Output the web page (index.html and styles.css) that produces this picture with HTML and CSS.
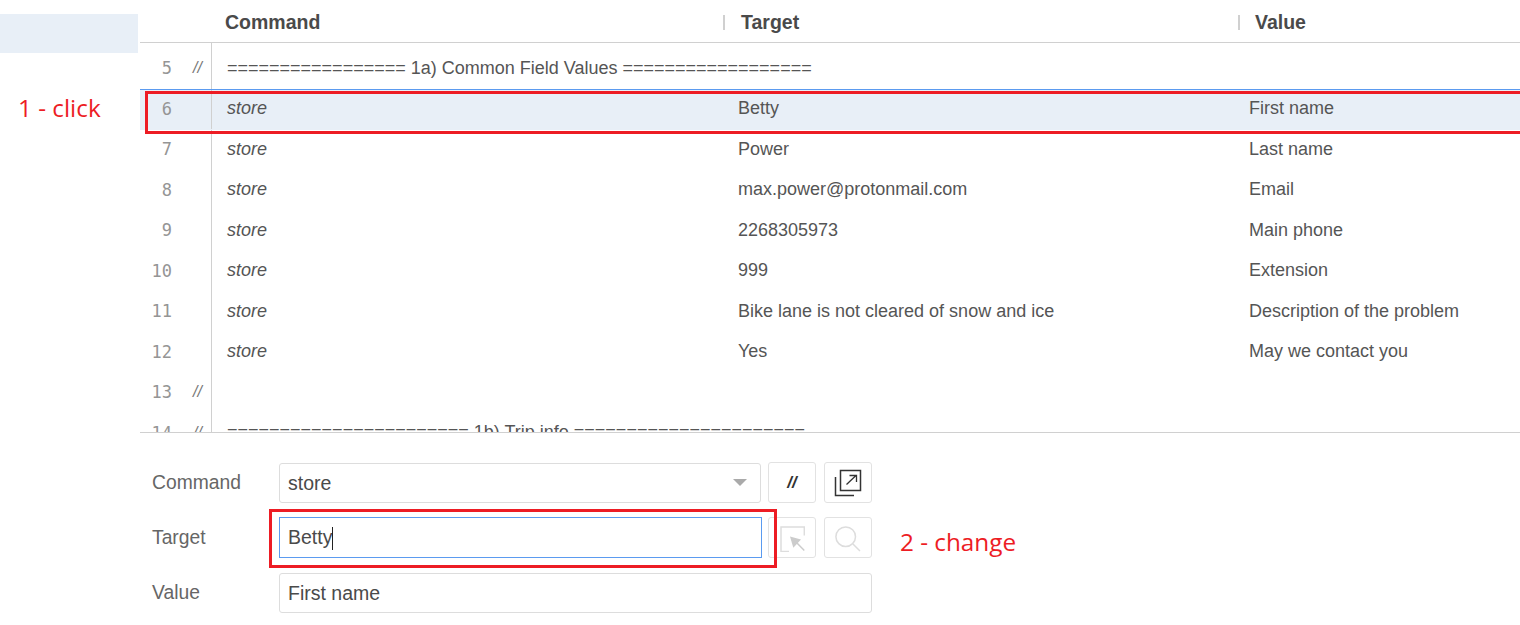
FILE: index.html
```html
<!DOCTYPE html>
<html lang="en">

<head>
    <meta charset="UTF-8">
    <title>Selenium IDE - Store values</title>
    <link rel="stylesheet" href="styles.css">
</head>

<body>
    <div class="page">
        <aside class="sidebar">
            <div class="sidebar-item"></div>
            <div class="note note-click">1 - click</div>
        </aside>

        <main class="editor">
            <section class="commands">
                <div class="table-head">
                    <div class="head-cell head-command">Command</div>
                    <div class="head-cell head-target">Target</div>
                    <div class="head-cell head-value">Value</div>
                </div>

                <div class="table-body">
                    <div class="row"><span class="num">5</span><span class="flag">//</span><span class="cmd comment">================= 1a) Common Field Values ==================</span></div>
                    <div class="row selected"><span class="num">6</span><span class="flag"></span><span class="cmd">store</span><span class="target">Betty</span><span class="value">First name</span></div>
                    <div class="row"><span class="num">7</span><span class="flag"></span><span class="cmd">store</span><span class="target">Power</span><span class="value">Last name</span></div>
                    <div class="row"><span class="num">8</span><span class="flag"></span><span class="cmd">store</span><span class="target">max.power@protonmail.com</span><span class="value">Email</span></div>
                    <div class="row"><span class="num">9</span><span class="flag"></span><span class="cmd">store</span><span class="target">2268305973</span><span class="value">Main phone</span></div>
                    <div class="row"><span class="num">10</span><span class="flag"></span><span class="cmd">store</span><span class="target">999</span><span class="value">Extension</span></div>
                    <div class="row"><span class="num">11</span><span class="flag"></span><span class="cmd">store</span><span class="target">Bike lane is not cleared of snow and ice</span><span class="value">Description of the problem</span></div>
                    <div class="row"><span class="num">12</span><span class="flag"></span><span class="cmd">store</span><span class="target">Yes</span><span class="value">May we contact you</span></div>
                    <div class="row"><span class="num">13</span><span class="flag">//</span></div>
                    <div class="row"><span class="num">14</span><span class="flag">//</span><span class="cmd comment">======================= 1b) Trip info ======================</span></div>
                </div>
                <div class="highlight-row"></div>
            </section>

            <section class="form">
                <div class="form-row">
                    <label class="form-label">Command</label>
                    <div class="field field-select">
                        <span>store</span>
                        <span class="caret"></span>
                    </div>
                    <button class="icon-btn slashes">//</button>
                    <button class="icon-btn">
                        <svg width="28" height="28" viewBox="0 0 28 28" fill="none" stroke="#333" stroke-width="1.500">
                            <path d="M6.500 1.500H26.500V21.500H6.500Z"/>
                            <path d="M1.500 8V26.500H20"/>
                            <path d="M12.500 15.500L22 6.500M15.500 6.500H22.500V13" stroke-width="1.300"/>
                        </svg>
                    </button>
                </div>
                <div class="form-row">
                    <label class="form-label">Target</label>
                    <div class="field field-focus">Betty<span class="cursor"></span></div>
                    <button class="icon-btn">
                        <svg width="26" height="28" viewBox="0 0 26 28" fill="none" stroke="#ddd" stroke-width="1.500">
                            <path d="M25.300 11.500V3H2V27.500H10"/>
                            <path d="M11 12.500L22 15.500L14.300 23.800Z" fill="#ccc" stroke="none"/>
                            <path d="M17 18L25.300 26.500" stroke="#ccc"/>
                        </svg>
                    </button>
                    <button class="icon-btn">
                        <svg width="26" height="28" viewBox="0 0 26 28" fill="none" stroke="#ddd" stroke-width="1.500">
                            <circle cx="10.700" cy="12.700" r="9.800"/>
                            <path d="M18 20L25 27"/>
                        </svg>
                    </button>
                    <div class="note note-change">2 - change</div>
                </div>
                <div class="form-row">
                    <label class="form-label">Value</label>
                    <div class="field field-wide">First name</div>
                </div>
                <div class="highlight-target"></div>
            </section>
        </main>
    </div>
</body>

</html>
```
FILE: styles.css
```css
/* RESET */
* {
    margin: 0;
    padding: 0;
    box-sizing: border-box;
}

body {
    font-family: 'Liberation Sans', Arial, sans-serif;
    color: #555;
    background-color: #fff;
    overflow: hidden;
}

.page {
    display: flex;
    height: 625px;
}

/* SIDEBAR */
.sidebar {
    width: 140px;
    padding-top: 14px;
    flex-shrink: 0;
}

.sidebar-item {
    width: 138px;
    height: 39px;
    background-color: #e8eff7;
}

.note {
    font-family: 'Open Sans', sans-serif;
    font-size: 24.300px;
    color: #ed1c24;
    white-space: nowrap;
}

.note-click {
    margin: 39px 0 0 18px;
    line-height: 32px;
}

/* TABLE */
.editor {
    flex: 1;
    min-width: 0;
}

.commands {
    position: relative;
    height: 433px;
    border-bottom: 1px solid #d0d0d0;
    overflow: hidden;
}

.table-head {
    display: flex;
    height: 43px;
    border-bottom: 1px solid #d0d0d0;
    font-size: 19.500px;
    font-weight: 700;
    color: #4a4a4a;
}

.head-cell {
    padding-top: 11px;
    line-height: 22px;
}

.head-command {
    width: 583px;
    padding-left: 85px;
}

.head-target,
.head-value {
    position: relative;
}

.head-target {
    width: 515px;
    padding-left: 18px;
}

.head-value {
    padding-left: 17px;
}

.head-target::before,
.head-value::before {
    content: "";
    position: absolute;
    left: 0;
    top: 15px;
    width: 2px;
    height: 15px;
    background-color: #d0d0d0;
}

.table-body {
    padding-top: 5px;
    background: linear-gradient(#d0d0d0, #d0d0d0) 71px 0 / 1px 100% no-repeat;
}

.row {
    display: flex;
    align-items: center;
    height: 40.500px;
    font-size: 18px;
}

.row.selected {
    position: relative;
    background: linear-gradient(#d0d0d0, #d0d0d0) 71px 0 / 1px 100% no-repeat, #e8eff7;
    box-shadow: inset 0 1px 0 #5b9bf0, 0 1px 0 #e8eff7;
}

.num {
    width: 32px;
    text-align: right;
    font-family: 'DejaVu Sans Mono', monospace;
    font-size: 17px;
    color: #959595;
}

.flag {
    width: 39px;
    padding-left: 21px;
    font-size: 16px;
    font-style: italic;
    color: #777;
}

.cmd {
    width: 511px;
    margin-left: 16px;
    font-style: italic;
    white-space: nowrap;
}

.cmd.comment {
    font-style: normal;
}

.target {
    width: 511px;
    white-space: nowrap;
}

.value {
    white-space: nowrap;
}

.highlight-row {
    position: absolute;
    left: 5px;
    top: 91px;
    right: -10px;
    height: 43px;
    border: 3px solid #ed1c24;
}

/* FORM */
.form {
    position: relative;
    padding: 29px 0 0 12px;
}

.form-row {
    display: flex;
    align-items: center;
    height: 41px;
    margin-bottom: 14px;
    font-size: 19.500px;
}

.form-label {
    width: 127px;
    font-size: 19.300px;
    color: #666;
}

.field {
    height: 40px;
    width: 482px;
    padding-left: 8px;
    line-height: 38px;
    border: 1px solid #ddd;
    border-radius: 3px;
    color: #4a4a4a;
}

.field-select {
    display: flex;
    align-items: center;
    justify-content: space-between;
    padding-right: 13px;
}

.caret {
    border-left: 7px solid transparent;
    border-right: 7px solid transparent;
    border-top: 7px solid #aaa;
}

.field-focus {
    height: 41px;
    width: 483px;
    line-height: 39px;
    border-color: #5b9bf0;
    border-radius: 0;
}

.cursor {
    display: inline-block;
    width: 1px;
    height: 23px;
    background-color: #222;
    vertical-align: -6px;
}

.field-focus + .icon-btn {
    margin-left: 6px;
}

.field-wide {
    width: 593px;
}

.icon-btn {
    display: flex;
    align-items: center;
    justify-content: center;
    width: 48px;
    height: 41px;
    margin-left: 7px;
    background-color: #fff;
    border: 1px solid #e2e2e2;
    border-radius: 3px;
}

.icon-btn + .icon-btn {
    margin-left: 8px;
}

.slashes {
    font-family: 'Liberation Sans', sans-serif;
    font-size: 17px;
    font-style: italic;
    font-weight: 700;
    color: #333;
}

.note-change {
    margin-left: 28px;
    margin-top: 8px;
}

.highlight-target {
    position: absolute;
    left: 129px;
    top: 76px;
    width: 508px;
    height: 59px;
    border: 3px solid #ed1c24;
}
```
